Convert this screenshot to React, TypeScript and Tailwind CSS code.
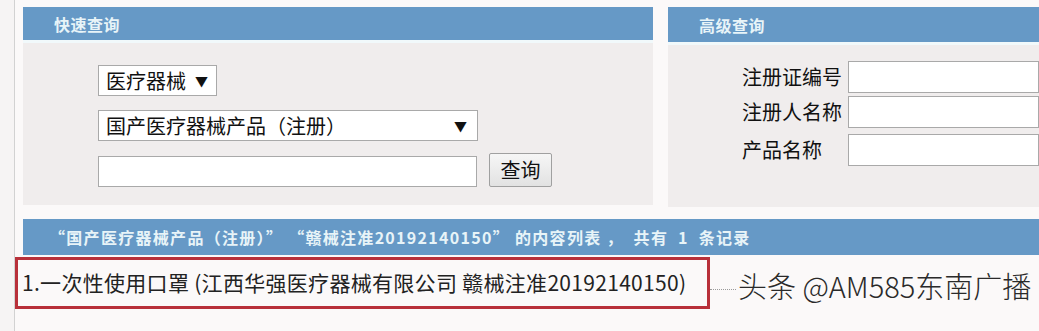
import React from "react";

const sans = { fontFamily: '"Noto Sans CJK SC", "Noto Sans", sans-serif' };

function PanelHeader({ title, h }: { title: string; h: string }) {
  return (
    <div className={`${h} bg-[#6699c6] flex items-center pl-[31px] text-[16px] font-bold text-[#e8f4f8] tracking-[0.5px]`}>
      {title}
    </div>
  );
}

function FakeSelect({ label, width, arrowPad }: { label: string; width: string; arrowPad: string }) {
  return (
    <div className={`${width} h-[31px] bg-white border border-[#a9a9a9] flex items-center justify-between pl-[7px] ${arrowPad} text-[20px] text-[#111] leading-none`}>
      <span>{label}</span>
      <span className="text-[13px]">▼</span>
    </div>
  );
}

function AdvRow({ label, mt }: { label: string; mt: string }) {
  return (
    <div className={`flex items-center ${mt}`}>
      <div className="w-[106px] text-[20px] text-[#111] leading-none whitespace-nowrap">{label}</div>
      <div className="flex-1 h-[32px] bg-white border border-[#a9a9a9]" />
    </div>
  );
}

export default function App() {
  return (
    <div className="w-[1039px] h-[331px] overflow-hidden bg-[#fbf9f9] flex" style={sans}>
      <div className="w-[14px] bg-[#f6f4f4]" />
      <div className="w-px bg-[#d2d2d2]" />
      <div className="flex-1 flex flex-col pt-[7px] min-w-0">
        {/* 查询面板 */}
        <div className="flex ml-[8px] gap-[15px]">
          <div className="w-[630px] flex flex-col">
            <PanelHeader title="快速查询" h="h-[33px]" />
            <div className="h-[3px] bg-[#f1f9fb]" />
            <div className="h-[162px] bg-[#f0eded] pl-[75px] pt-[22px]">
              <FakeSelect label="医疗器械" width="w-[119px]" arrowPad="pr-[8px]" />
              <div className="mt-[14px]">
                <FakeSelect label="国产医疗器械产品（注册）" width="w-[380px]" arrowPad="pr-[10px]" />
              </div>
              <div className="flex items-end mt-[12px] gap-[12px]">
                <div className="w-[379px] h-[31px] bg-white border border-[#a9a9a9]" />
                <div className="w-[63px] h-[34px] border border-[#a0a0a0] rounded-[2px] bg-gradient-to-b from-[#f6f6f6] to-[#e2e2e2] flex items-center justify-center text-[20px] text-[#111] leading-none">
                  查询
                </div>
              </div>
            </div>
          </div>
          <div className="flex-1 flex flex-col">
            <PanelHeader title="高级查询" h="h-[35px]" />
            <div className="h-[3px] bg-[#f1f9fb]" />
            <div className="h-[162px] bg-[#f0eded] pl-[74px] pt-[16px]">
              <AdvRow label="注册证编号" mt="" />
              <AdvRow label="注册人名称" mt="mt-[3px]" />
              <AdvRow label="产品名称" mt="mt-[6px]" />
            </div>
          </div>
        </div>

        {/* 结果 */}
        <div className="mt-[12px] ml-[8px] h-[36px] bg-[#6699c6] flex items-center pl-[26px] text-[16px] font-bold text-[#e8f4f8] whitespace-pre tracking-[1.3px]">
          {"“国产医疗器械产品（注册）” “赣械注准20192140150” 的内容列表 ，  共有  1  条记录"}
        </div>
        <div className="flex items-center mt-[2px]">
          <div className="w-[695px] h-[52px] border-[3px] border-[#b8303a] flex items-center pl-[4px] text-[21px] tracking-[0.3px] text-[#222] whitespace-nowrap">
            1.一次性使用口罩 (江西华强医疗器械有限公司 赣械注准20192140150)
          </div>
          <div className="w-[26px] border-t border-dotted border-[#9a9a9a] mt-[12px]" />
          <div className="pl-[2px] text-[29px] font-light text-[#2a2a2a] whitespace-nowrap leading-none mt-[4px]">
            头条 @AM585东南广播
          </div>
        </div>
      </div>
    </div>
  );
}
